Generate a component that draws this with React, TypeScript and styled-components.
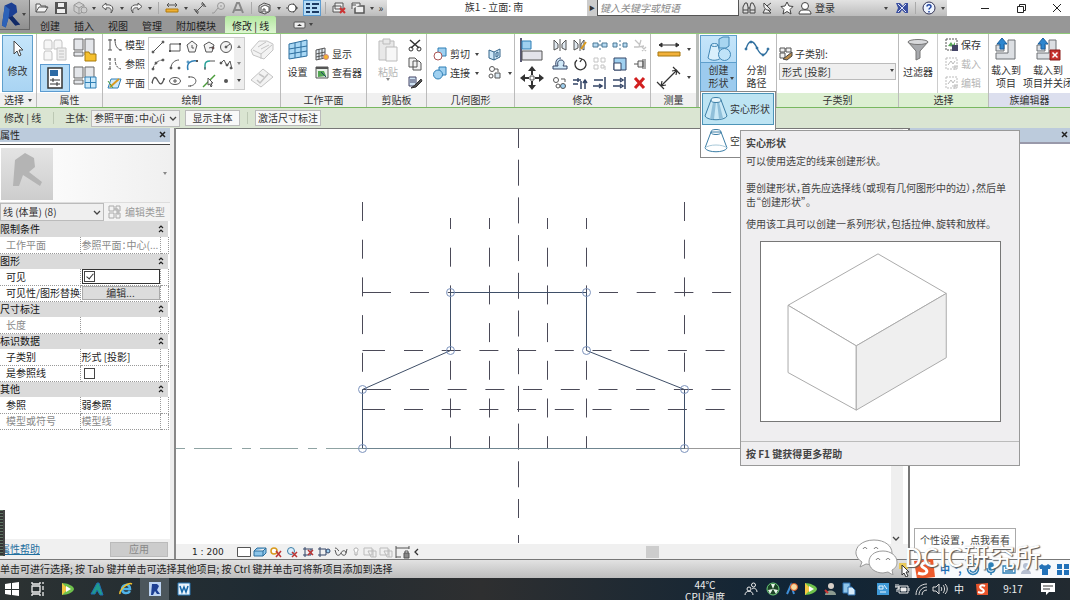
import React, { ReactNode } from 'react';
import styled, { createGlobalStyle, css } from 'styled-components';

const Global = createGlobalStyle`
  * { box-sizing: border-box; }
  html, body { margin: 0; height: 100%; overflow: hidden; }
  body, button, input, select {
    font-family: "Noto Sans CJK SC", "Noto Sans", sans-serif;
    font-size: 10px;
    line-height: 12px;
    color: #333;
  }
  button { background: none; border: 0; padding: 0; white-space: nowrap; }
  svg { display: block; flex: none; }
`;

/* ---------- icons ---------- */

type Art = [number, number, ReactNode];
const G = '#555';
const L = '#c4c4c4';
const B = '#2f7fb5';
const LB = '#9fd0f0';

const revitR = (
  <g>
    <path d="M8 5 L15 2 L20 5 L21 12 L16 16 L21 22 L24 25 L19 26 L12 18 L9 28 L5 26 Z" fill="#1c3f93" />
    <path d="M8 5 L13 9 L12 18 L9 28 L5 26 Z" fill="#2d62b8" />
    <path d="M12 18 L16 16 L24 25 L19 26 Z" fill="#122a66" />
  </g>
);
const sheets = (c1: string, c2: string) => (
  <g stroke={c1} fill={c2}>
    <path d="M3 2h6l1 2v7H2V4z M13 2h6l1 2v7h-8V4z M3 13h6l1 2v7H2v-7z" />
  </g>
);

const art: Record<string, Art> = {
  folder: [16, 14, <path d="M2 11V3h4l1 2h5v2M2 11l3-5h9l-3 5z" fill="#f4f4f4" stroke={G} />],
  save: [14, 14, <g><path d="M1 1h12v12H1z" fill="#555" /><path d="M4 2h6v4H4zM3 8h8v4H3z" fill="#eee" /></g>],
  cube: [16, 14, <g fill="#ccc" stroke="#999"><path d="M2 4l5-3 5 3v6l-5 3-5-3zM2 4l5 3 5-3M7 7v6" /><circle cx="12" cy="9" r="3" /></g>],
  undo: [16, 14, <path d="M6 2L2 5.500l4 3.500V7c4-1 6 1 5 5 4-5 1-9-5-8z" fill="#f2f2f2" stroke={G} />],
  redo: [16, 14, <path d="M10 2l4 3.500L10 9V7C6 6 4 8 5 12 1 7 4 3 10 4z" fill="#f2f2f2" stroke={G} />],
  ruler: [16, 14, <g><path d="M3 4h10M3 4l2-2M3 4l2 2M13 4l-2-2M13 4l-2 2" stroke={G} /><path d="M2 8h12v3H2z" fill="#f0b030" stroke="#b07a10" /></g>],
  dim: [16, 14, <path d="M4 11L12 3M2 8l4 5M10 1l4 5M4 11V8M4 11h3M12 3v3M12 3H9" stroke={G} fill="none" />],
  tag: [16, 14, <g fill="none" stroke="#999"><circle cx="10" cy="5" r="3.500" /><path d="M10 4v2M7 7l-4 5H1" /></g>],
  letterA: [16, 14, <path d="M3 12L7 2h2l4 10M5 9h6" stroke="#888" strokeWidth="2" fill="none" />],
  house: [16, 14, <g stroke={G} fill="#ddd"><path d="M2 5l5-3 6 2v6l-5 3-6-2z" /><path d="M4 6l4-2 4 2v5H8V8H6v3H4z" fill="#fff" /></g>],
  section: [16, 14, <g><path d="M8 2l5 5-5 5z" fill="#444" /><circle cx="7" cy="7" r="4" fill="#fff" stroke={G} /><path d="M1 7h2" stroke={G} /></g>],
  thin: [16, 14, <path d="M2 3h4M8 3h7M2 7h4M8 7h5M2 11h4M8 11h7" stroke="#1c3a63" strokeWidth="2" />],
  closeWin: [16, 14, <g><path d="M4 2h8v6H4zM2 5h8v6H2z" fill="#eee" stroke={G} /><path d="M9 7l5 5M14 7l-5 5" stroke="#c33" strokeWidth="2" /></g>],
  switchWin: [16, 14, <g fill="#eee" stroke={G}><path d="M5 5h9v7H5z" strokeWidth="1.500" /><path d="M2 8V2h8v2M2 4h4" /></g>],
  binoc: [16, 14, <g fill="#ddd" stroke="#444"><path d="M2 12V6l2-4h2l1 4v6zM9 12V6l1-4h2l2 4v6z" /><path d="M7 7h2M2 9h5M9 9h5" /></g>],
  dish: [16, 14, <path d="M4 2c-1 5 2 8 7 7zM7 5l4-3M8 9l3 3H3l2-4" fill="#eee" stroke="#444" />],
  star: [16, 14, <path d="M8 1l2 4 4 .5-3 3 1 4.500-4-2.500L4 13l1-4.500-3-3L6 5z" fill="#fff" stroke="#444" />],
  user: [14, 14, <g fill="#fff" stroke="#444"><circle cx="7" cy="5" r="3.500" /><path d="M1 13c0-3 2-4 4-4h4c2 0 4 1 4 4z" /></g>],
  exchange: [14, 12, <g><path d="M1 1h4l3 3 2-3h3v10h-3L7 8l-2 3H1l2-5z" fill="#3a4fa0" /><path d="M3 2l8 8M11 2l-8 8" stroke="#dfe4f7" /></g>],
  help: [14, 14, <g><circle cx="7" cy="7" r="6" fill="#eef4ff" stroke="#335" /><path d="M5 5.500C5 3 9 3 9 5.500 9 7 7 7 7 8.500M7 10v1.500" stroke="#2144a0" strokeWidth="1.500" fill="none" /></g>],
  min: [12, 12, <path d="M2 6.500h8" stroke="#222" />],
  restore: [12, 12, <path d="M2.500 4.500h6v6h-6zM4.500 4V2.500h6v6H9" stroke="#222" fill="none" />],
  close: [12, 12, <path d="M2 2l8 8M10 2l-8 8" stroke="#222" />],
  closeBold: [10, 10, <path d="M2 2l5 5M7 2L2 7" stroke="#222" strokeWidth="1.500" />],
  tabToggle: [14, 8, <g><rect x="1" y="1" width="11" height="6" rx="1" fill="#eee" stroke="#555" /><path d="M4 5l2.500-2L9 5z" fill="#333" /></g>],

  cursor: [14, 18, <path d="M3 1v13l3-3 2 5 2-1-2-5h4z" fill="#fff" stroke="#444" />],
  typeOff: [26, 24, <g>{sheets(L, '#f6f6f6')}<path d="M15 10h9v12h-9z" fill="#eee" stroke={L} /><path d="M17 13h5M17 16h5M17 19h5" stroke={L} /></g>],
  family: [26, 24, <g fill="#e4e6ea" stroke="#666"><path d="M2 1h9v11H2zM13 1h9v16h-9zM2 14h9v4H2z" /><path d="M13 14h4l1 2h6v7H13z" fill="#f5c02e" stroke="#a87b0c" /></g>],
  props: [18, 22, <g><path d="M2 1h14v20H2z" fill="#fff" stroke="#333" strokeWidth="1.500" /><path d="M4 3h8v6H4z" fill="#2e6ba5" /><path d="M4 13h10M4 17h10M7 11v4M11 15v4" stroke="#333" /></g>],
  typeProps: [26, 24, <g fill="#e4e6ea" stroke="#666"><path d="M2 1h9v11H2zM13 1h9v11h-9zM2 14h9v4H2z" /><path d="M13 11h11v11H13zM18.500 11v11M13 16.500h11" fill="#c9e8fa" stroke={B} /></g>],
  modelLine: [16, 14, <path d="M3 1v11M1 2h4M1 12h4M8 1c0 7 2 10 6 11M7 2h2M12 12h3" stroke={G} fill="none" />],
  refLine: [16, 14, <path d="M3 1v11M1 2h4M1 12h4M8 1c0 7 2 10 6 11" stroke={G} fill="none" strokeDasharray="3 1" />],
  plane: [16, 14, <g><path d="M4 3h10l-3 9H1z" fill="#cfe9fa" stroke={B} /><path d="M3 11l9-8" stroke="#d99a1e" strokeWidth="2" /><path d="M1 5l5 7" stroke="#4b9c3c" /></g>],
  line: [14, 14, <g stroke={G} fill={G}><path d="M2 12L12 2" /><circle cx="2" cy="12" r="1" /><circle cx="12" cy="2" r="1" /></g>],
  rect: [14, 14, <g stroke={G} fill="none"><path d="M2 4h10v7H2z" /><path d="M1 11h2M11 4h2" strokeWidth="2" /></g>],
  poly1: [14, 14, <g stroke={G} fill="#f3f3f3"><path d="M7 1l5 4-2 7H4L2 5z" /><path d="M7 8V5M7 8h2" /></g>],
  poly2: [14, 14, <g stroke={G} fill="#f3f3f3"><path d="M7 2l5 3-2 7H4L2 5z" /><path d="M7 8l4-1" /><circle cx="11" cy="8" r="1" fill="#a22" /></g>],
  circle: [14, 14, <g stroke={G} fill="#f3f3f3"><circle cx="7" cy="7" r="5.500" /><path d="M7 7l4-3" /><circle cx="7" cy="7" r="1" fill={G} /></g>],
  arc1: [14, 14, <g stroke={G} fill={G}><path d="M2 12C3 7 7 3 12 3" fill="none" strokeDasharray="3 1" /><circle cx="2" cy="12" r="1" /><circle cx="5" cy="6" r="1" /><circle cx="12" cy="3" r="1" /></g>],
  arc2: [14, 14, <g stroke={G} fill={G}><path d="M3 11C3 6 7 3 11 3" fill="none" /><circle cx="3" cy="11" r="1" /><circle cx="11" cy="11" r="1" /></g>],
  arc3: [14, 14, <g fill="none" stroke={B}><path d="M3 13C1 6 6 3 12 4" strokeWidth="1.500" /><circle cx="3" cy="5" r="1" /><path d="M11 4h2" stroke={G} strokeWidth="2" /></g>],
  arc4: [14, 14, <g fill="none"><path d="M3 12V8c0-3 2-4 5-4" stroke="#2aa198" strokeWidth="1.500" /><path d="M8 4h5M3 10v3" stroke={G} /></g>],
  spline: [14, 14, <g stroke={G} fill={G}><path d="M1 7l4-4 3 6 3-5 2 8" fill="none" /><circle cx="2" cy="6" r="1" /><circle cx="8" cy="8" r="1" /><circle cx="12" cy="11" r="1" /></g>],
  wave: [14, 14, <path d="M1 9c2-8 4-6 6-2s4 4 6-2M1 9h1M12 5h2" stroke={G} fill="none" strokeWidth="1.300" />],
  ellipse: [14, 14, <g stroke={G} fill="none"><ellipse cx="7" cy="7" rx="5.500" ry="3.500" /><path d="M7 5v4M5 7h4" /></g>],
  partEll: [14, 14, <path d="M4 3c9-1 9 8 1 9M3 3h2M3 12h3" stroke={G} fill="none" />],
  pick: [14, 14, <g><path d="M1 13L13 1" stroke="#4a9c3a" strokeWidth="1.500" /><path d="M6 4v7l2-1 1 3 1-1-1-3h2z" fill="#fff" stroke={G} /></g>],
  point: [14, 14, <circle cx="7" cy="7" r="2" fill={G} />],
  face: [26, 24, <g stroke={L} fill="#f3f3f3"><path d="M2 12l8-9h8l6 3v6l-9 9-11-4z" /><path d="M4 12l8 4 11-9M12 16v5M9 9l8-5M12 11l8-4" fill="none" /></g>],
  facePlane: [26, 24, <g stroke={L} fill="#f3f3f3"><path d="M2 14L14 3l10 8-12 10z" /><path d="M8 14l3 3 8-9M10 8l5 3" fill="none" strokeWidth="1.500" /></g>],
  grid: [24, 24, <g fill="#a9d8f5" stroke="#2d6f9f"><path d="M3 6L21 2v16L3 21z" /><path d="M9 5v15M15 3v16M3 11l18-3M3 16l18-3" /></g>],
  show: [16, 16, <g stroke={G} fill="#e5eef5"><path d="M2 4l9-2v10l-9 2zM5 3v10M8 3v9M2 8l9-2M2 11l9-2" /><circle cx="12" cy="11" r="2.500" fill="#f4b52d" stroke="#c88" /></g>],
  viewer: [16, 16, <g><path d="M2 2h12v11H2z" fill="#e8f0e8" stroke={G} /><path d="M2 3h12" stroke={G} strokeWidth="2" /><path d="M4 12V6h6l2 5z" fill="#52a552" /><path d="M7 7l5 5" stroke="#246" /></g>],
  paste: [22, 24, <g stroke="#bbb" fill="#e8e8e8"><path d="M2 3h15v19H2z" /><path d="M6 1h7v5H6z" /><path d="M9 9h11v14H9z" fill="#f7f7f7" /></g>],
  cut: [14, 14, <g stroke="#333" fill="none"><path d="M2 2l9 8M12 2L3 10" strokeWidth="1.500" /><circle cx="3" cy="11" r="2" /><circle cx="11" cy="11" r="2" /></g>],
  copy: [14, 14, <path d="M1 1h6l2 2v7H1zM5 4h6l2 2v7H5z" fill="#f2f2f2" stroke={G} />],
  match: [16, 14, <g><path d="M2 1h7v9H2z" fill="#cfe3f3" stroke="#446" /><path d="M3 4h5M3 6h5" stroke="#446" /><path d="M14 3L8 9l-4 3 5-1 6-6z" fill="#555" stroke="#333" /></g>],
  geoCut: [16, 16, <g><path d="M6 2h8v8H6z" fill={LB} stroke={B} /><circle cx="6" cy="10" r="4" fill="#fff" stroke="#a55" /></g>],
  geoJoin: [16, 16, <g fill={LB} stroke={B}><path d="M7 2h7v8H7z" /><circle cx="6" cy="9.500" r="4.500" /></g>],
  geoWall: [16, 16, <path d="M2 4l5 2 6-3v8l-6 3-5-2zM7 6v8M9 7l2-1v4l-2 1z" fill="#cfe8f8" stroke="#34658a" />],
  geoMore: [16, 16, <g stroke={G} fill="#fff"><circle cx="5" cy="4" r="2.500" /><circle cx="4" cy="11" r="2" /><path d="M8 8h5v5H8z" fill="#dbe9f3" /><path d="M8 4h3v3" fill="none" /></g>],
  align: [26, 24, <g><path d="M2 0v24" stroke="#224" strokeWidth="1.500" /><path d="M3 3h9v8H3z" fill={LB} stroke={B} /><path d="M3 13h20v9H3z" fill="#e3e3ea" stroke={G} /></g>],
  move: [26, 24, <g fill="#333"><path d="M13 0l4 5h-3v4h-2V5H9zM13 24l-4-5h3v-4h2v4h3zM1 12l5-4v3h4v2H6v3zM25 12l-5 4v-3h-4v-2h4V8z" /><path d="M11 10h4v4h-4z" fill="#fff" stroke={G} /></g>],
  mirror1: [16, 14, <path d="M2 2l4 4v4l-4 2zM8 1v12M14 2l-4 4v4l4 2z" fill="#dfe8f0" stroke={G} />],
  mirror2: [16, 14, <g fill="#dfe8f0" stroke={G}><path d="M2 2l4 4v4l-4 2zM8 1v12M12 2l-3 4v4l3 2z" /><path d="M14 4l-5 7" stroke="#d99a1e" strokeWidth="2" /></g>],
  split1: [16, 14, <path d="M1 5h5v4H1zM10 5h5v4h-5zM6 7h4M8 2v2M8 10v2" fill="#b9dcf3" stroke="#4a7896" />],
  split2: [16, 14, <path d="M1 5h4v4H1zM11 5h4v4h-4zM8 2v2M8 6v2M8 10v2" fill="#b9dcf3" stroke="#4a7896" />],
  pinOff: [16, 14, <path d="M3 2l5 5M9 2L7 9l5-1M10 9l4 4M14 9l-4 4M2 9h5" stroke={L} fill="none" strokeWidth="1.300" />],
  offset: [16, 14, <path d="M1 12h14V9h-4c2-3 1-6-2-6S5 6 6 9H1zM4 9c-1-5 1-8 5-8" fill="#cfe8f8" stroke="#346" />],
  rotate: [16, 14, <path d="M5 3a5.500 5.500 0 1 0 5-1M10 2L7 1M10 2L8 5" stroke="#333" fill="none" strokeWidth="1.300" />],
  array: [16, 14, <path d="M2 1h4v4H2zM9 1h4v4H9zM2 8h4v4H2zM9 8h3v3H9zM13 9v4" stroke={L} fill="none" />],
  scale: [16, 14, <g fill={LB} stroke="#346"><path d="M2 1h12v12H2z" /><path d="M2 6h7v7H2z" fill="#fff" /></g>],
  pin: [16, 14, <path d="M6 4h5v6H6zM11 2v10M13 2v10M2 7h4" fill="#eee" stroke={G} />],
  copyEl: [16, 14, <g stroke={G} fill="#fff"><circle cx="4" cy="4" r="2.500" /><path d="M9 3h4v3" fill="none" /><circle cx="11" cy="10" r="2.500" fill={LB} /><circle cx="6" cy="10" r="2" /></g>],
  trim1: [16, 14, <path d="M1 4h8M1 8h5M6 2v4M9 5v8M13 13V4M11 7l2-3 2 3" stroke="#346" fill="none" strokeWidth="1.500" />],
  trim2: [16, 14, <path d="M1 10h8M7 8l3 2-3 2M2 4h9M13 1v12" stroke="#346" fill="none" strokeWidth="1.500" />],
  trim3: [16, 14, <path d="M1 4h8M1 10h8M8 2l3 2-3 2M8 8l3 2-3 2M13 1v12" stroke="#346" fill="none" strokeWidth="1.500" />],
  del: [16, 14, <path d="M3 2l9 10M12 2L3 12" stroke="#d22020" strokeWidth="3" />],
  measureBig: [26, 20, <g><path d="M3 5h20M3 5l3-2v4zM23 5l-3-2v4z" stroke="#333" fill="#333" /><path d="M2 12h22v4H2z" fill="#f2b13a" stroke="#a5770f" /></g>],
  dimBig: [26, 24, <path d="M5 20L21 4M1 16l7 7M17 1l7 7M5 20l1-5M5 20l5-1M21 4l-1 5M21 4l-5 1" stroke="#333" fill="none" strokeWidth="1.200" />],
  shapes: [26, 26, <g stroke="#4387b5" fill="#d9effc"><path d="M13 3l4-2h6v9l-3 2h-7z" fill="#a8d5f0" /><path d="M5 9h7l3 13c-4 3-10 3-13 0z" /><ellipse cx="8.500" cy="9" rx="3.500" ry="1.500" /><circle cx="18.500" cy="18.500" r="6" fill="#bfe3f8" /></g>],
  divide: [26, 24, <g stroke="#2f6f9f" fill="#2f6f9f"><path d="M2 12C5 1 10 4 13 11s8 10 11 1" fill="none" strokeWidth="1.300" /><circle cx="2" cy="12" r="1" /><circle cx="13" cy="11" r="1" /><circle cx="24" cy="12" r="1" /><circle cx="7" cy="5" r="1" /><circle cx="19" cy="18" r="1" /></g>],
  subcat: [14, 14, <g><path d="M1 1h5v4H1zM7 1h5v4H7zM1 6h5v5H1z" fill="#f2f2f2" stroke={G} /><path d="M4 12l9-7v4l-5 4z" fill="#b98a4a" stroke="#444" /></g>],
  solid: [26, 26, <g stroke="#3c7ea6" fill="#c9e8f6"><path d="M8 4L2 20c2 5 20 5 22 0L18 4z" /><path d="M10 6L7 23h4L13 6zM16 6l4 16-4 1-2-17z" fill="#90bfd9" stroke="none" /><ellipse cx="13" cy="4" rx="5" ry="2.500" fill="#e8f6fc" /></g>],
  hollow: [26, 26, <g stroke="#3c7ea6" fill="none"><path d="M8 4L2 20c2 5 20 5 22 0L18 4z" /><ellipse cx="13" cy="4" rx="5" ry="2.500" /><path d="M2 20c4-4 18-4 22 0" stroke="#a9c9d9" /></g>],
  filter: [24, 24, <g stroke="#777"><path d="M2 4l8 9v9l4-2v-7l8-9z" fill="#a7a9ad" /><ellipse cx="12" cy="4" rx="10" ry="2.500" fill="#d8d9dc" /></g>],
  selSave: [14, 14, <g><path d="M1 1h11v11H1z" fill="none" stroke={G} strokeDasharray="2 1" /><path d="M3 8l3-4 2 3 2-3v5z" fill="#5aa65a" /><path d="M7 7h6v6H7z" fill="#446" /></g>],
  selOff: [14, 14, <g stroke="#bbb" fill="none"><path d="M1 1h11v11H1z" strokeDasharray="2 1" /><path d="M3 8l3-4 2 3 2-3M7 10h6M10 8v5" /></g>],
  load: [24, 24, <g><path d="M2 8h8v6H2zM14 3h7v19H2v-6h12z" fill="#dcdfe3" stroke="#6c7075" /><path d="M8 1l5 6h-3v5H6V7H3z" fill="#2c86cf" stroke="#1b5f9c" /></g>],
  loadClose: [26, 24, <g><path d="M2 8h8v6H2zM14 3h7v19H2v-6h12z" fill="#dcdfe3" stroke="#6c7075" /><path d="M8 1l5 6h-3v5H6V7H3z" fill="#2c86cf" stroke="#1b5f9c" /><path d="M15 13h10v10H15z" fill="#c8322f" stroke="#8a1d1b" /><path d="M17.500 15.500l5 5M22.500 15.500l-5 5" stroke="#fff" strokeWidth="1.500" /></g>],

  vRect: [14, 12, <path d="M.5 1.500h13v9H.5z" fill="#fff" stroke={G} />],
  vCube: [14, 12, <path d="M1 5l3-3h9v5l-3 3H1zM1 5h9l3-3M10 5v5" fill="#8cc5ea" stroke="#2b6f9e" />],
  vSun: [14, 12, <g><circle cx="5" cy="5" r="3" fill="#fff" stroke="#d99a1e" strokeWidth="1.500" /><path d="M7 5l5 6M12 5l-5 6" stroke="#b33" strokeWidth="1.500" /></g>],
  vShade: [14, 12, <g><circle cx="6" cy="5" r="3.500" fill="#dceefa" stroke="#3c7ea6" /><path d="M7 6l5 5M12 6l-5 5" stroke="#b33" strokeWidth="1.500" /></g>],
  vCrop: [14, 12, <g><path d="M2 9h8V3M4 1v10M2 3h10" stroke="#346" fill="none" /><path d="M7 4l5 5M12 4l-5 5" stroke="#b33" strokeWidth="1.500" /></g>],
  vCropOn: [14, 12, <g stroke="#346" fill="none"><path d="M1 9h8V3M3 1v10M1 3h8" /><circle cx="11" cy="5" r="2" fill={LB} /></g>],
  vGlass: [16, 12, <path d="M2 2c3 0 2 2 4 3M3 7c0 3 4 3 5 0s5-3 5 0-4 3-5 0M3 7l-1-3M13 7l1-4" stroke={G} fill="none" />],
  vBulb: [10, 12, <path d="M5 2c3 0 2 3 1 4v3H4V6C3 5 2 2 5 2z" fill="#fff" stroke="#aaa" />],
  vOff: [14, 12, <path d="M1 2h8v7H1zM10 3v8M5 5h8v6H8z" stroke="#bbb" fill="none" />],
  vLock: [16, 14, <g stroke={G} fill="none"><path d="M1 3h13M1 1v12M14 1v3M1 12h5" /><path d="M9 8h5v5H9z" fill="#888" /><path d="M10 8V6h3v2" /></g>],
  chevD: [10, 8, <path d="M2 2l3 3 3-3" stroke="#444" fill="none" strokeWidth="1.300" />],
  chevL: [8, 10, <path d="M5 2L2 5l3 3" stroke="#333" fill="none" strokeWidth="1.300" />],
  dbl: [8, 10, <path d="M2 4l2-2 2 2M2 8l2-2 2 2" stroke="#222" fill="none" strokeWidth="1.200" />],
  editType: [14, 14, <path d="M1 1h5v5H1zM8 1h4v5H8zM1 8h5v5H1zM8 8h4v5H8zM6 4h4v6" stroke="#aaa" fill="none" />],

  win: [14, 14, <path d="M0 2l6-1v6H0zM7 1l7-1v7H7zM0 8h6v5l-6-1zM7 8h7v6l-7-1z" fill="#fff" />],
  task: [16, 14, <path d="M1 2V0M1 4h8v6H1zM1 12v2M9 12v2M9 2V0M1 2h8M1 12h8M12 0v2M12 4v4M12 10v4" stroke="#eee" fill="none" strokeWidth="1.300" />],
  play: [14, 14, <g><path d="M1 1c5 0 12 3 12 6S6 13 1 13z" fill="#6fc24c" /><path d="M1 1l6 6-6 6z" fill="#f5c842" /><path d="M5 4l5 3-5 3z" fill="#fff" /></g>],
  acad: [14, 14, <path d="M7 1L1 12h4l2-4 3 5h3L9 1z" fill="#1f9c8c" stroke="#1f6fb5" />],
  ie: [14, 14, <g fill="none"><path d="M3 7h8c0-6-8-5-8 0s6 5 8 2" stroke="#4fb4ea" strokeWidth="2.500" /><path d="M1 12C0 8 9 0 13 2" stroke="#f2c230" strokeWidth="1.500" /></g>],
  revitTask: [14, 14, <g><path d="M1 0h12v14H1z" fill="#bcd3f2" /><path d="M4 2h5l2 2-2 4 3 4H9L7 9l-2 4H3z" fill="#1c3f93" /></g>],
  word: [14, 14, <g><path d="M1 1h12v12H1z" fill="#e9f3fb" stroke="#2a7ab8" /><path d="M3 4l2 6 2-5 2 5 2-6" stroke="#1667a8" strokeWidth="1.500" fill="none" /></g>],
  people: [14, 14, <g stroke="#eee" fill="none"><circle cx="5" cy="7" r="2" /><circle cx="9.500" cy="3" r="2" /><path d="M1 13c0-5 8-5 8 0M8 7c2-2 5 0 5 3" /></g>],
  fan: [14, 14, <g><circle cx="7" cy="7" r="6" fill="#1c4426" stroke="#6fd07a" /><path d="M7 7L5 2h4zM7 7l5 1-2 4zM7 7l-5 1 2 4z" fill="#e8f6ea" /></g>],
  tool: [14, 14, <g><path d="M2 12L6 3l3 9" stroke="#3f8fd8" strokeWidth="2" fill="none" /><circle cx="9" cy="5" r="3.500" fill="#f5d9a0" stroke="#d9541e" /></g>],
  person: [14, 14, <g><circle cx="8" cy="4" r="3" fill="#d8d0c8" /><path d="M2 13c0-6 11-6 11 0z" fill="#8c9a90" /><path d="M2 8l3 3" stroke="#c33" strokeWidth="2" /></g>],
  docs: [14, 14, <g fill="#8fc5ea" stroke="#2a6fae"><path d="M1 1h7v10H1z" /><path d="M6 5h4l3 3v5H6z" fill="#d7ebf9" /></g>],
  app: [14, 14, <g><path d="M1 1h12v12H1z" fill="#3f9ad8" /><path d="M3 4h4v3H3zM8 3l3 4M4 10h6" stroke="#e8f5ff" fill="none" /></g>],
  battery: [16, 12, <g stroke="#eee" fill="none"><path d="M5 3h9v7H5zM15 5v3" /><path d="M7 5h5v3H7z" fill="#eee" /><path d="M2 1v3M4 1v3M1 4h4v2H3v3" /></g>],
  wifi: [14, 14, <path d="M2 13C2 6 7 2 13 2M5 13c0-5 4-8 8-8M8 13c0-3 2-5 5-5" stroke="#ddd" fill="none" />],
  sound: [16, 12, <path d="M1 4h3l3-3v10L4 8H1zM9 4c1 1 1 3 0 4M11 2c2 2 2 6 0 8M13 1c3 3 3 7 0 10" stroke="#ddd" fill="none" />],
  sogou: [14, 14, <g><path d="M1 2l12-1v12H2z" fill="#e8542b" /><path d="M10 4c-4-2-7 1-3 3s1 5-4 3" stroke="#fff" strokeWidth="2" fill="none" /></g>],
  sogouBig: [24, 22, <g><path d="M2 3L21 1l2 18-18 2z" fill="#ec5a2c" /><path d="M18 6c-6-3-12 1-6 4s2 8-6 5" stroke="#fff" strokeWidth="3" fill="none" /></g>],
  notice: [16, 14, <g><path d="M1 1h14v9H9l-3 3v-3H1z" fill="#fff" /><path d="M3 4h10M3 7h7" stroke="#333" /></g>],
  smile: [14, 14, <g stroke={B} fill="none" strokeWidth="1.500"><circle cx="7" cy="7" r="5.500" /><path d="M4 8c1 3 5 3 6 0M5 4v1M9 4v1" /></g>],
  mic: [14, 14, <g stroke={B} fill="none" strokeWidth="1.500"><rect x="5" y="1" width="4" height="7" rx="2" fill={B} /><path d="M3 6c0 6 8 6 8 0M7 11v2" /></g>],
  keys: [14, 14, <path d="M1 4h12v7H1zM3 6h8M3 9h8" stroke={B} fill="none" strokeWidth="1.300" />],
  guest: [14, 14, <g fill="#b6bfd0"><circle cx="6" cy="4" r="3" /><path d="M1 12c0-6 10-6 10 0z" /></g>],
  shirt: [14, 14, <path d="M4 2c2 2 4 2 6 0l3 2-1 3h-2v6H4V7H2L1 4z" fill="#2372b8" />],
  tiles: [14, 14, <path d="M1 2h5v5H1zM8 2h5v5H8zM1 8h5v5H1zM8 8h5v5H8z" fill="#2372b8" />],
  wechat: [46, 38, <g fill="#fff" stroke="#999"><path d="M20 3C8 3 1 10 2 17c1 4 3 6 6 8l-2 5 6-3 7 1c12 0 19-5 19-12S31 3 20 3z" /><path d="M29 14c-9 0-14 5-14 11s6 11 14 11l5-1 5 3-1-5c4-2 5-5 5-8 0-6-6-11-14-11z" /><path d="M9 12c1-2 3-2 4 0M20 12c1-2 3-2 4 0M22 23c1-2 3-2 4 0M32 23c1-2 3-2 4 0" fill="none" stroke="#666" /></g>],
  pointer: [14, 16, <g><path d="M1 2h9v6H1z" fill="#e8c95a" /><path d="M4 4v10l2-2 2 4 2-1-2-4h3z" fill="#fff" stroke="#333" /></g>],
};

const Icon = ({ n }: { n: string }) => {
  const [w, h, d] = art[n];
  return (
    <svg width={w} height={h} viewBox={`0 0 ${w} ${h}`} fill="none" aria-hidden="true">
      {d}
    </svg>
  );
};

const Caret = styled.span<{ $up?: boolean; $dim?: boolean }>`
  flex: none;
  width: 0;
  height: 0;
  border: 2px solid transparent;
  border-width: ${p => (p.$up ? '0 2px 3px' : '3px 2px 0')};
  border-top-color: ${p => (p.$up ? 'transparent' : p.$dim ? '#888' : '#444')};
  border-bottom-color: ${p => (p.$up ? '#777' : 'transparent')};
`;

/* ---------- frame ---------- */

const Page = styled.div`
  position: relative;
  display: flex;
  flex-direction: column;
  height: 100vh;
  overflow: hidden;
  background: #fff;
`;

const Header = styled.header`
  display: grid;
  grid-template-columns: 30px minmax(0, 1fr);
  grid-template-rows: 16px 17px;
  flex: none;
  background: #979797;
`;
const LogoButton = styled.button`
  grid-row: 1 / 3;
  height: 30px;
  display: flex;
  align-items: center;
  overflow: hidden;
  background: linear-gradient(#b4b4b4, #8f8f8f);
  border-right: 1px solid #666;
  border-bottom: 1px solid #666;
`;
const TitleRow = styled.div`
  display: flex;
  background: #fff;
`;
const QuickBar = styled.div`
  display: flex;
  align-items: center;
  gap: 1px;
  padding: 0 2px 0 3px;
  background: linear-gradient(#e2e2e2, #bcbcbc);
`;
const QuickButton = styled.button<{ $on?: boolean; $slim?: boolean }>`
  width: ${p => (p.$slim ? 8 : 18)}px;
  height: 16px;
  display: flex;
  align-items: center;
  justify-content: center;
  ${p => p.$on && css`background: #b5dcf7; box-shadow: inset 0 0 0 1px #5c9bd0;`}
`;
const Divider = styled.span`
  flex: none;
  width: 1px;
  height: 12px;
  margin: 0 3px;
  background: #aaa;
`;
const DocTitle = styled.h1`
  flex: 1;
  margin: 0;
  font-size: 10px;
  line-height: 14px;
  font-weight: 400;
  text-align: center;
  padding-left: 14px;
`;
const SearchToggle = styled.button`
  width: 10px;
  background: #ccc;
  font-size: 6px;
`;
const Search = styled.input`
  width: 142px;
  border: 1px solid #555;
  border-top: 0;
  padding: 0 2px;
  background: #fff;
  &::placeholder { color: #888; opacity: 1; font-style: italic; }
`;
const InfoBar = styled(QuickBar)`
  width: 208px;
  padding: 0 0 0 1px;
`;
const SignIn = styled.button`
  display: flex;
  align-items: center;
  gap: 3px;
  flex: 1;
  padding-left: 1px;
  & > ${Caret} { margin-left: auto; margin-right: 4px; }
`;
const WinButtons = styled.div`
  display: flex;
  align-items: center;
  justify-content: space-between;
  width: 123px;
  padding: 0 7px 0 32px;
`;
const Tabs = styled.nav`
  display: flex;
  align-items: stretch;
  padding-left: 3px;
`;
const Tab = styled.button<{ $on?: boolean }>`
  padding: 0 7px;
  line-height: 19px;
  color: #222;
  ${p => p.$on && css`
    margin-left: 2px;
    background: linear-gradient(#b3e79f, #dcf6d0);
    border-radius: 2px 2px 0 0;
  `}
`;
const TabMore = styled.button`
  display: flex;
  align-items: center;
  gap: 2px;
  margin-left: 17px;
`;

/* ---------- ribbon ---------- */

const Ribbon = styled.section`
  flex: none;
  display: flex;
  height: 75px;
  background: #fff;
  border-top: 1px solid #8fc978;
  border-bottom: 1px solid #78b860;
`;
const PanelBox = styled.section<{ $w: number; $grow?: boolean; $gap?: boolean }>`
  flex: ${p => (p.$grow ? '1 0' : '0 0')} ${p => p.$w}px;
  min-width: 0;
  display: flex;
  flex-direction: column;
  border-right: ${p => (p.$gap ? '3px solid #b9bdb9' : '1px solid #bbb')};
`;
const PanelBody = styled.div<{ $gap?: number; $pad?: string }>`
  flex: 1;
  display: flex;
  align-items: center;
  gap: ${p => p.$gap ?? 0}px;
  padding: ${p => p.$pad ?? '0'};
`;
const PanelTitle = styled.h2<{ $tone?: string }>`
  flex: none;
  margin: 0;
  height: 14px;
  display: flex;
  align-items: center;
  justify-content: center;
  gap: 4px;
  font-size: 10px;
  line-height: 12px;
  font-weight: 400;
  background: ${p => p.$tone ?? '#f0f0f0'};
`;
const Stack = styled.div<{ $w?: number }>`
  display: flex;
  flex-direction: column;
  align-items: flex-start;
  gap: 4px;
  ${p => p.$w && css`width: ${p.$w}px;`}
`;
const ToolButton = styled.button<{ $off?: boolean }>`
  display: flex;
  align-items: center;
  gap: 2px;
  height: 15px;
  color: ${p => (p.$off ? '#b5b5b5' : '#333')};
  & > ${Caret} { margin-left: 3px; }
`;
const BigButton = styled.button<{ $w: number; $off?: boolean }>`
  position: relative;
  flex: none;
  width: ${p => p.$w}px;
  height: 57px;
  display: flex;
  flex-direction: column;
  align-items: center;
  padding-top: 3px;
  line-height: 13px;
  color: ${p => (p.$off ? '#b5b5b5' : '#333')};
  & > svg { margin-bottom: 3px; }
`;
const ActiveButton = styled(BigButton)`
  background: linear-gradient(#c5e5fa, #a9d4f3);
  border: 1px solid #5f9fcc;
`;
const ModifyButton = styled(ActiveButton)`
  padding-top: 4px;
  gap: 3px;
`;
const SplitButton = styled(ActiveButton)`
  padding: 0;
  & > svg { margin: 0; }
`;
const TallButton = styled(BigButton)`
  padding-top: 2px;
  & > svg { margin-bottom: 2px; }
`;
const IconGrid = styled.div<{ $cols: number; $cw: number; $rh: number }>`
  display: grid;
  grid-template-columns: repeat(${p => p.$cols}, ${p => p.$cw}px);
  grid-auto-rows: ${p => p.$rh}px;
`;
const IconButton = styled.button<{ $on?: boolean }>`
  display: flex;
  align-items: center;
  justify-content: center;
  gap: 5px;
  ${p => p.$on && css`background: #b5dcf7; box-shadow: inset 0 0 0 1px #5c9bd0;`}
`;
const Gallery = styled.div`
  display: flex;
  border: 1px solid #ccc;
`;
const GalleryScroll = styled.div`
  width: 10px;
  display: grid;
  background: #eee;
`;
const ShapePanel = styled.div`
  position: relative;
  flex: 0 0 77px;
  display: flex;
  border-right: 1px solid #bbb;
  padding: 1px 0 0 1px;
`;
const SplitCaret = styled(Caret)`
  position: absolute;
  right: 2px;
  bottom: 11px;
`;
const SplitHalf = styled.span`
  flex: 1;
  align-self: stretch;
  border-top: 1px solid #5f9fcc;
  background: #9ccbee;
`;
const ShapeMenu = styled.div`
  position: absolute;
  z-index: 3;
  top: 57px;
  left: 1px;
  width: 76px;
  height: 67px;
  padding: 1px;
  background: #fff;
  border: 1px solid #888;
`;
const MenuItem = styled.button<{ $on?: boolean }>`
  display: flex;
  align-items: center;
  gap: 1px;
  width: 72px;
  height: 32px;
  border: 1px solid ${p => (p.$on ? '#4c94b8' : 'transparent')};
  background: ${p => (p.$on ? '#bde4f3' : 'none')};
`;
const Tooltip = styled.aside`
  position: absolute;
  z-index: 4;
  top: 96px;
  left: 41px;
  width: 280px;
  height: 336px;
  display: flex;
  flex-direction: column;
  background: #efeef0;
  border: 1px solid #999;
  color: #444;
  line-height: 14px;
  font-feature-settings: "halt";
  & > h3 { margin: 5px 5px 4px; font-size: 10px; line-height: 14px; }
  & > p { margin: 0 5px; }
  & > p + p { margin-top: 13px; }
  & > p + p + p { margin-top: 8px; }
  & > svg { margin: 10px auto 0 19px; border: 1px solid #777; background: #fff; }
  & > footer { margin-top: auto; height: 24px; padding: 5px; border-top: 1px solid #bbb; font-weight: 700; }
`;
const SubcatField = styled.label`
  display: flex;
  flex-wrap: wrap;
  align-items: center;
  gap: 2px;
  width: 117px;
`;
const SelectBox = styled.span<{ $w: number; $h: number }>`
  position: relative;
  display: flex;
  flex: none;
  width: ${p => p.$w}px;
  height: ${p => p.$h}px;
  & > select {
    appearance: none;
    width: 100%;
    margin: 0;
    padding: 0 2px;
    border: 1px solid #bbb;
    border-radius: 0;
    background: #efefef;
    font-feature-settings: "halt";
  }
  & > :last-child { position: absolute; right: 2px; top: calc(50% - 3px); pointer-events: none; }
`;
const Choice = styled.div`
  display: flex;
  align-items: center;
  height: 59px;
  border-left: 1px solid #ccc;
  padding-left: 7px;
`;

/* ---------- options bar ---------- */

const Options = styled.div`
  flex: none;
  display: flex;
  align-items: center;
  height: 20px;
  padding-left: 4px;
  background: #dae5d2;
  & > label { margin: 0 3px 0 4px; }
  & > ${Divider} { margin: 0 7px; background: #bcc8b4; }
`;
const OptionButton = styled.button<{ $w: number }>`
  width: ${p => p.$w}px;
  height: 16px;
  background: #f8f8f8;
  border: 1px solid #bbb;
`;
const Spacer = styled.span`flex: 0 0 5px;`;

/* ---------- body ---------- */

const Main = styled.main`
  flex: 1;
  min-height: 0;
  display: flex;
  background: #e9e9ec;
`;
const Palette = styled.aside`
  position: relative;
  flex: 0 0 170px;
  display: flex;
  flex-direction: column;
  background: #fff;
`;
const Gutter = styled.div`
  flex: 0 0 6px;
  border-right: 2px solid #888;
  background: #eee;
`;
const PaneHead = styled.div`
  flex: none;
  display: flex;
  align-items: center;
  justify-content: space-between;
  height: 14px;
  padding-right: 2px;
  background: #bccbdc;
  color: #222;
`;
const TypePreview = styled.div`
  flex: none;
  display: flex;
  align-items: center;
  justify-content: space-between;
  height: 59px;
  margin-top: 2px;
  padding: 1px 3px 1px 1px;
  border-top: 1px solid #444;
  border-bottom: 1px solid #ddd;
  background: linear-gradient(90deg, #fff, #f0f0f0);
`;
const Thumb = styled.div`
  width: 52px;
  height: 52px;
  background: linear-gradient(#e4e4e4, #cdcdcd);
`;
const TypeRow = styled.div`
  flex: none;
  display: flex;
  align-items: center;
  gap: 4px;
  height: 18px;
  background: #f3f3f3;
  & > button { display: flex; align-items: center; gap: 3px; color: #999; }
`;
const PropTable = styled.table`
  flex: none;
  width: 168px;
  table-layout: fixed;
  border-collapse: collapse;
  font-feature-settings: "halt";
  td, th { height: 16px; padding: 0; line-height: 14px; font-weight: 400; text-align: left; white-space: nowrap; overflow: hidden; border: 1px dotted #999; border-width: 0 1px 1px 0; }
`;
const GroupRow = styled.tr`
  background: #dadada;
  && > th { border: 0; }
`;
const GroupHead = styled.span`
  display: flex;
  align-items: center;
  justify-content: space-between;
  padding-right: 3px;
  color: #111;
`;
const PropRow = styled.tr<{ $dim?: boolean }>`
  color: ${p => (p.$dim ? '#8a8a8a' : '#222')};
  && > th { padding-left: 6px; overflow: visible; }
  && > td:nth-child(2) { padding-left: 1px; }
`;
const CheckCell = styled.span<{ $focus?: boolean }>`
  display: flex;
  align-items: center;
  height: 15px;
  padding-left: 2px;
  ${p => p.$focus && css`box-shadow: inset 0 0 0 1px #333;`}
  & > input {
    appearance: none;
    width: 11px;
    height: 11px;
    margin: 0;
    border: 1px solid #444;
    background: #fff;
  }
  & > input:checked::after {
    content: "";
    display: block;
    width: 3px;
    height: 6px;
    margin: 0 3px;
    border: solid #333;
    border-width: 0 1px 1px 0;
    transform: rotate(40deg);
  }
`;
const EditButton = styled.button`
  display: block;
  width: 100%;
  height: 14px;
  background: #dcdcdc;
  border: 1px solid #aaa;
`;
const PaletteFoot = styled.div`
  margin-top: auto;
  display: flex;
  align-items: center;
  justify-content: space-between;
  height: 20px;
  padding-right: 2px;
  background: #f0f0f0;
  & > a { color: #1f6f9f; }
  & > button { width: 58px; height: 15px; background: #ccc; border: 1px solid #bbb; color: #888; }
`;
const Meter = styled.div`
  position: absolute;
  left: 0;
  bottom: 3px;
  width: 5px;
  height: 46px;
  background: repeating-linear-gradient(#5d7462 0 1px, #333 1px 3px);
  border-right: 2px solid #444;
`;
const View = styled.section`
  flex: 1;
  min-width: 0;
  display: grid;
  grid-template: minmax(0, 1fr) 15px / minmax(0, 1fr) 17px;
  border-top: 1px solid #777;
  border-right: 2px solid #777;
  background: #fff;
`;
const Sheet = styled.div`
  overflow: hidden;
`;
const VScroll = styled.div`
  display: flex;
  align-items: flex-end;
  padding-bottom: 1px;
  background: linear-gradient(90deg, #efefef 12px, #fff 12px);
`;
const ViewBar = styled.div`
  grid-column: 1 / 3;
  display: flex;
  align-items: center;
  gap: 2px;
  padding-left: 16px;
  background: #f0f0f0;
`;
const Scale = styled.span`
  width: 43px;
  font-family: "DejaVu Sans", sans-serif;
  font-size: 9px;
  white-space: nowrap;
  color: #222;
`;
const HScroll = styled.div`
  flex: 1;
  display: flex;
  justify-content: center;
  padding-right: 26px;
`;
const Thumbbar = styled.span`
  width: 13px;
  height: 12px;
  background: #cdcdcd;
`;
const SidePane = styled.aside`
  flex: 0 0 160px;
  display: flex;
  flex-direction: column;
  background: #fff;
  & > ${PaneHead} { justify-content: flex-end; padding: 0; height: 16px; border-bottom: 2px solid #99a; }
`;
const Hint = styled.p`
  width: 102px;
  height: 25px;
  margin: auto 0 6px 4px;
  border: 1px solid #aaa;
  text-align: center;
  line-height: 22px;
  white-space: nowrap;
  color: #444;
`;

/* ---------- status and task bars ---------- */

const Status = styled.div`
  flex: none;
  display: flex;
  align-items: center;
  height: 19px;
  border-top: 1px solid #777;
  background: linear-gradient(#e2e2e2, #bdbdbd);
  & > p { flex: 1; margin: 0; white-space: nowrap; color: #222; }
`;
const Ime = styled.div`
  display: flex;
  align-items: center;
  align-self: stretch;
  justify-content: space-between;
  width: 158px;
  background: #f7f9fb;
  color: #1f6fb5;
  font-weight: 700;
`;
const Taskbar = styled.footer`
  flex: none;
  display: flex;
  align-items: center;
  height: 22px;
  background: linear-gradient(90deg, #2c3232, #1f2b33 25%, #2e2f30 45%, #0f2436 75%, #222a30);
  color: #eee;
`;
const TaskButton = styled.button<{ $w?: number; $on?: boolean }>`
  flex: none;
  width: ${p => p.$w ?? 29}px;
  height: 22px;
  display: flex;
  align-items: center;
  justify-content: center;
  color: #eee;
  background: ${p => (p.$on ? '#4c565c' : 'none')};
`;
const Temperature = styled.div`
  width: 42px;
  height: 22px;
  margin-left: auto;
  padding-top: 1px;
  overflow: hidden;
  text-align: center;
  white-space: nowrap;
`;
const Tray = styled.div`
  display: flex;
  width: 344px;
  padding-left: 13px;
`;
const Watermark = styled.div`
  position: absolute;
  z-index: 5;
  right: 29px;
  bottom: 25px;
  display: flex;
  align-items: center;
  gap: 4px;
  font-size: 26px;
  line-height: 36px;
  color: #fff;
  text-shadow: 1px 1px 1px #555, 1px 0 1px #999;
  pointer-events: none;
`;

/* ---------- pieces ---------- */

const Panel = ({ title, w, grow, gapEdge, tone, gap, pad, more, children }: {
  title: string; w: number; grow?: boolean; gapEdge?: boolean; tone?: string; gap?: number; pad?: string; more?: boolean; children: ReactNode;
}) => (
  <PanelBox $w={w} $grow={grow} $gap={gapEdge}>
    <PanelBody $gap={gap} $pad={pad}>{children}</PanelBody>
    <PanelTitle $tone={tone}>{title}{more && <Caret />}</PanelTitle>
  </PanelBox>
);

const Quick = ({ items }: { items: string[] }) => (
  <>
    {items.map((n, i) =>
      n === '|' ? <Divider key={i} />
        : n === 'v' ? <QuickButton key={i} $slim aria-label="more"><Caret /></QuickButton>
        : <QuickButton key={i} $on={n === 'thin'} aria-label={n}><Icon n={n} /></QuickButton>
    )}
  </>
);

const Icons = ({ names, on }: { names: string[]; on?: string }) => (
  <>{names.map(n => <IconButton key={n} $on={n === on} aria-label={n}><Icon n={n} /></IconButton>)}</>
);

const Group = ({ name }: { name: string }) => (
  <GroupRow><th colSpan={3}><GroupHead>{name}<Icon n="dbl" /></GroupHead></th></GroupRow>
);
const Prop = ({ name, dim, children }: { name: string; dim?: boolean; children?: ReactNode }) => (
  <PropRow $dim={dim}><th scope="row">{name}</th><td>{children}</td><td /></PropRow>
);

const nodes = [[450.5, 292.5], [586.5, 292.5], [586.5, 350.5], [684.5, 389.5], [684.5, 448.5], [362.5, 448.5], [362.5, 389.5], [450.5, 350.5]];

const Elevation = () => (
  <svg width="717" height="414" viewBox="176 129 717 414" fill="none" stroke="#4b4a58" aria-label="立面">
    <g strokeDasharray="19 18.700">
      <path d="M362.500 202V390M684.500 202V390" />
      <path d="M450.500 218V448M489.500 218V448M547.500 218V448M586.500 218V448" strokeDashoffset="8" />
      <path d="M410 292.500H451M599 292.500H893M404 350.500H893M410 389.500H893M404 409.500H893" />
    </g>
    <path d="M362.500 292.500H391M362.500 350.500H385M362.500 389.500H391M362.500 409.500H385" />
    <path d="M518.500 122V518" strokeDasharray="26 11.700" />
    <path d="M518.500 535V543" />
    <path d="M176 448.500H362" stroke="#8fa3a3" strokeDasharray="9 9 38 10" />
    <path d="M684 448.500H893" stroke="#999" />
    <path d="M362.500 448.500H684.500" stroke="#6f8590" />
    <path d="M362.500 448.500V389.500L450.500 350.500V292.500H586.500V350.500L684.500 389.500V448.500" stroke="#3f4f68" />
    {nodes.map(([x, y]) => <circle key={`${x}-${y}`} cx={x} cy={y} r="4" stroke="#7c93bd" />)}
  </svg>
);

export default function App() {
  return (
    <Page>
      <Global />
      <Header>
        <LogoButton aria-label="Revit">
          <svg width="22" height="30" viewBox="3 0 23 30">{revitR}</svg>
          <Caret />
        </LogoButton>
        <TitleRow>
          <QuickBar>
            <Quick items={['folder', 'save', 'cube', 'v', 'undo', 'v', 'redo', 'v', '|', 'ruler', 'v', 'dim', 'tag', 'letterA', '|', 'house', 'v', 'section', 'thin', '|', 'closeWin', 'switchWin', 'v']} />
            <QuickButton $slim>»</QuickButton>
          </QuickBar>
          <DocTitle>族1 - 立面: 南</DocTitle>
          <SearchToggle aria-label="search">▶</SearchToggle>
          <Search placeholder="键入关键字或短语" aria-label="键入关键字或短语" />
          <InfoBar>
            <Quick items={['binoc', 'dish', 'star']} />
            <SignIn><Icon n="user" />登录<Caret /></SignIn>
            <Quick items={['exchange', '|', 'help', 'v']} />
          </InfoBar>
          <WinButtons>
            <button aria-label="minimize"><Icon n="min" /></button>
            <button aria-label="restore"><Icon n="restore" /></button>
            <button aria-label="close"><Icon n="close" /></button>
          </WinButtons>
        </TitleRow>
        <Tabs>
          {['创建', '插入', '视图', '管理', '附加模块'].map(t => <Tab key={t}>{t}</Tab>)}
          <Tab $on>修改 | 线</Tab>
          <TabMore aria-label="ribbon"><Icon n="tabToggle" /><Caret /></TabMore>
        </Tabs>
      </Header>

      <Ribbon>
        <Panel title="选择" w={37} more pad="0 0 0 2px">
          <ModifyButton $w={31}><Icon n="cursor" />修改</ModifyButton>
        </Panel>
        <Panel title="属性" w={66} pad="0 0 0 3px">
          <IconGrid $cols={2} $cw={30} $rh={28}>
            <Icons names={['typeOff', 'family', 'props', 'typeProps']} on="props" />
          </IconGrid>
        </Panel>
        <Panel title="绘制" w={178} pad="0 0 0 4px" gap={2}>
          <Stack $w={39}>
            <ToolButton><Icon n="modelLine" />模型</ToolButton>
            <ToolButton><Icon n="refLine" />参照</ToolButton>
            <ToolButton><Icon n="plane" />平面</ToolButton>
          </Stack>
          <Gallery>
            <IconGrid $cols={5} $cw={17} $rh={17}>
              <Icons names={['line', 'rect', 'poly1', 'poly2', 'circle', 'arc1', 'arc2', 'arc3', 'arc4', 'spline', 'wave', 'ellipse', 'partEll', 'pick', 'point']} />
            </IconGrid>
            <GalleryScroll>
              <IconButton aria-label="up"><Caret $up /></IconButton>
              <IconButton aria-label="down"><Caret $dim /></IconButton>
              <IconButton aria-label="all"><Caret /></IconButton>
            </GalleryScroll>
          </Gallery>
          <IconGrid $cols={1} $cw={30} $rh={28}><Icons names={['face', 'facePlane']} /></IconGrid>
        </Panel>
        <Panel title="工作平面" w={86}>
          <BigButton $w={33}><Icon n="grid" /><span>设置</span></BigButton>
          <Stack>
            <ToolButton><Icon n="show" />显示</ToolButton>
            <ToolButton><Icon n="viewer" />查看器</ToolButton>
          </Stack>
        </Panel>
        <Panel title="剪贴板" w={60} pad="0 0 0 5px" gap={3}>
          <BigButton $w={32} $off><Icon n="paste" /><span>粘贴</span><Caret $dim /></BigButton>
          <IconGrid $cols={1} $cw={16} $rh={19}><Icons names={['cut', 'copy', 'match']} /></IconGrid>
        </Panel>
        <Panel title="几何图形" w={88} pad="0 0 0 5px" gap={8}>
          <Stack>
            <ToolButton><Icon n="geoCut" />剪切<Caret /></ToolButton>
            <ToolButton><Icon n="geoJoin" />连接<Caret /></ToolButton>
          </Stack>
          <Stack>
            <ToolButton aria-label="wall"><Icon n="geoWall" /></ToolButton>
            <ToolButton aria-label="more"><Icon n="geoMore" /><Caret /></ToolButton>
          </Stack>
        </Panel>
        <Panel title="修改" w={136} pad="0 0 0 4px" gap={5}>
          <IconGrid $cols={1} $cw={26} $rh={28}><Icons names={['align', 'move']} /></IconGrid>
          <IconGrid $cols={5} $cw={20} $rh={19}>
            <Icons names={['mirror1', 'mirror2', 'split1', 'split2', 'pinOff', 'offset', 'rotate', 'array', 'scale', 'pin', 'copyEl', 'trim1', 'trim2', 'trim3', 'del']} />
          </IconGrid>
        </Panel>
        <Panel title="测量" w={48} gapEdge pad="0 0 0 4px">
          <IconGrid $cols={1} $cw={36} $rh={28}>
            <IconButton aria-label="measure"><Icon n="measureBig" /><Caret /></IconButton>
            <IconButton aria-label="dimension"><Icon n="dimBig" /><Caret /></IconButton>
          </IconGrid>
        </Panel>
        <ShapePanel>
          <SplitButton $w={37}>
            <Icon n="shapes" />
            <SplitHalf>创建<br />形状</SplitHalf>
            <SplitCaret />
          </SplitButton>
          <TallButton $w={39}><Icon n="divide" /><span>分割</span><span>路径</span></TallButton>
          <ShapeMenu>
            <MenuItem $on><Icon n="solid" />实心形状</MenuItem>
            <MenuItem><Icon n="hollow" />空心形状</MenuItem>
          </ShapeMenu>
          <Tooltip>
            <h3>实心形状</h3>
            <p>可以使用选定的线来创建形状。</p>
            <p>要创建形状，首先应选择线（或现有几何图形中的边），然后单击“创建形状”。</p>
            <p>使用该工具可以创建一系列形状，包括拉伸、旋转和放样。</p>
            <svg width="241" height="181" viewBox="760 241 241 181" stroke="#aaa" fill="#fff">
              <path d="M878 253L947 293L856 346L787 305Z" />
              <path d="M787 305V373L856 411V346Z" />
              <path d="M856 346V411L947 358V293Z" fill="#efefef" />
            </svg>
            <footer>按 F1 键获得更多帮助</footer>
          </Tooltip>
        </ShapePanel>
        <Panel title="子类别" w={122} tone="#dcefd2" pad="0 0 0 2px">
          <SubcatField>
            <Icon n="subcat" />子类别:
            <SelectBox $w={117} $h={17}>
              <select><option>形式 [投影]</option></select>
              <Caret />
            </SelectBox>
          </SubcatField>
        </Panel>
        <Panel title="选择" w={90} tone="#dcefd2">
          <BigButton $w={38}><Icon n="filter" /><span>过滤器</span></BigButton>
          <Choice>
            <Stack>
              <ToolButton><Icon n="selSave" />保存</ToolButton>
              <ToolButton $off><Icon n="selOff" />载入</ToolButton>
              <ToolButton $off><Icon n="selOff" />编辑</ToolButton>
            </Stack>
          </Choice>
        </Panel>
        <Panel title="族编辑器" w={82} grow tone="#dcdfee">
          <TallButton $w={34}><Icon n="load" /><span>载入到</span><span>项目</span></TallButton>
          <TallButton $w={50}><Icon n="loadClose" /><span>载入到</span><span>项目并关闭</span></TallButton>
        </Panel>
      </Ribbon>

      <Options>
        修改 | 线
        <Spacer /><Divider />
        <label htmlFor="host">主体:</label>
        <SelectBox $w={89} $h={17}>
          <select id="host"><option>参照平面：中心(i</option></select>
          <Icon n="chevD" />
        </SelectBox>
        <Spacer />
        <OptionButton $w={55}>显示主体</OptionButton>
        <Divider />
        <OptionButton $w={66}>激活尺寸标注</OptionButton>
      </Options>

      <Main>
        <Palette>
          <PaneHead>属性<Icon n="closeBold" /></PaneHead>
          <TypePreview>
            <Thumb>
              <svg width="52" height="52" viewBox="0 0 52 52">
                <path d="M14 12L24 5L33 10L34 19L28 24L41 34L39 38L22 27L18 38H12Z" fill="#b4b4b4" />
              </svg>
            </Thumb>
            <Caret $dim />
          </TypePreview>
          <TypeRow>
            <SelectBox $w={104} $h={18}>
              <select aria-label="类型"><option>线 (体量) (8)</option></select>
              <Icon n="chevD" />
            </SelectBox>
            <button><Icon n="editType" />编辑类型</button>
          </TypeRow>
          <PropTable>
            <colgroup><col width="80" /><col width="80" /><col width="8" /></colgroup>
            <tbody>
              <Group name="限制条件" />
              <Prop name="工作平面" dim>参照平面：中心(...</Prop>
              <Group name="图形" />
              <Prop name="可见"><CheckCell $focus><input type="checkbox" defaultChecked aria-label="可见" /></CheckCell></Prop>
              <Prop name="可见性/图形替换"><EditButton>编辑...</EditButton></Prop>
              <Group name="尺寸标注" />
              <Prop name="长度" dim />
              <Group name="标识数据" />
              <Prop name="子类别">形式 [投影]</Prop>
              <Prop name="是参照线"><CheckCell><input type="checkbox" aria-label="是参照线" /></CheckCell></Prop>
              <Group name="其他" />
              <Prop name="参照">弱参照</Prop>
              <Prop name="模型或符号" dim>模型线</Prop>
            </tbody>
          </PropTable>
          <PaletteFoot>
            <a href="#help">属性帮助</a>
            <button>应用</button>
          </PaletteFoot>
          <Meter />
        </Palette>
        <Gutter />
        <View>
          <Sheet><Elevation /></Sheet>
          <VScroll><Icon n="chevD" /></VScroll>
          <ViewBar>
            <Scale>1 : 200</Scale>
            {['vRect', 'vCube', 'vSun', 'vShade', 'vCrop', 'vCropOn', 'vGlass', 'vBulb', 'vOff', 'vOff', 'vLock', 'chevL'].map((n, i) => (
              <IconButton key={i} aria-label={n}><Icon n={n} /></IconButton>
            ))}
            <HScroll><Thumbbar /></HScroll>
          </ViewBar>
        </View>
        <SidePane>
          <PaneHead><Icon n="closeBold" /></PaneHead>
          <Hint>个性设置，点我看看</Hint>
        </SidePane>
      </Main>

      <Status>
        <p>单击可进行选择; 按 Tab 键并单击可选择其他项目; 按 Ctrl 键并单击可将新项目添加到选择</p>
        <Icon n="pointer" />
        <Ime>
          <Icon n="sogouBig" />中<span>°,</span>
          {['smile', 'mic', 'keys', 'guest', 'shirt', 'tiles'].map(n => <Icon key={n} n={n} />)}
        </Ime>
      </Status>

      <Taskbar>
        <TaskButton $w={24} aria-label="start"><Icon n="win" /></TaskButton>
        {['task', 'play', 'acad', 'ie', 'revitTask', 'word'].map(n => (
          <TaskButton key={n} $on={n === 'revitTask'} aria-label={n}><Icon n={n} /></TaskButton>
        ))}
        <Temperature>44℃<br />CPU温度</Temperature>
        <Tray>
          <TaskButton $w={24} aria-label="people"><Icon n="people" /></TaskButton>
          {['fan', 'tool', 'play', 'person'].map(n => <TaskButton $w={19} key={n} aria-label={n}><Icon n={n} /></TaskButton>)}
          <TaskButton $w={19} aria-label="docs"><Icon n="docs" /></TaskButton>
          <Spacer /><Spacer /><Spacer />
          {['app', 'battery', 'wifi', 'sound'].map(n => <TaskButton $w={19} key={n} aria-label={n}><Icon n={n} /></TaskButton>)}
          <TaskButton $w={20}>中</TaskButton>
          <TaskButton $w={26} aria-label="sogou"><Icon n="sogou" /></TaskButton>
          <TaskButton $w={36}>9:17</TaskButton>
          <TaskButton $w={34} aria-label="notice"><Icon n="notice" /></TaskButton>
        </Tray>
      </Taskbar>

      <Watermark><Icon n="wechat" />DCIC研究所</Watermark>
    </Page>
  );
}
